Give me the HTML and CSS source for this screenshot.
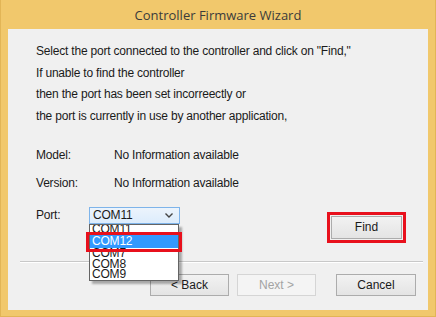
FILE: index.html
```html
<!DOCTYPE html>
<html lang="en">
<head>
    <meta charset="UTF-8">
    <meta name="viewport" content="width=device-width, initial-scale=1.0">
    <title>Controller Firmware Wizard</title>
    <link rel="stylesheet" href="styles.css">
</head>
<body>
    <div class="window">
        <div class="titlebar">Controller Firmware Wizard</div>

        <div class="content">
            <!-- intro text -->
            <div class="intro">
                <p>Select the port connected to the controller and click on "Find,"</p>
                <p>If unable to find the controller</p>
                <p>then the port has been set incorreectly or</p>
                <p>the port is currently in use by another application,</p>
            </div>

            <!-- controller info -->
            <div class="info-row">
                <span class="label">Model:</span>
                <span class="value">No Information available</span>
            </div>
            <div class="info-row">
                <span class="label">Version:</span>
                <span class="value">No Information available</span>
            </div>

            <!-- port select -->
            <div class="port-row">
                <span class="label port-label">Port:</span>
                <div class="combo">
                    <div class="combo-box">
                        <span>COM11</span>
                        <svg class="chevron" width="8" height="5" viewBox="0 0 8 5">
                            <polyline points="0.5,0.5 4,4 7.5,0.5" fill="none" stroke="#444" stroke-width="1.4"/>
                        </svg>
                    </div>
                    <ul class="combo-list">
                        <li class="cut">COM11</li>
                        <li class="selected">COM12</li>
                        <li>COM7</li>
                        <li>COM8</li>
                        <li>COM9</li>
                    </ul>
                    <div class="mark mark-item"></div>
                </div>
                <div class="find-wrap">
                    <button class="btn find-btn">Find</button>
                </div>
            </div>

            <div class="separator"></div>

            <!-- wizard buttons -->
            <div class="footer">
                <button class="btn">&lt; Back</button>
                <button class="btn" disabled>Next &gt;</button>
                <button class="btn cancel-btn">Cancel</button>
            </div>
        </div>
    </div>
</body>
</html>
```

FILE: styles.css
```css
* {
    margin: 0;
    padding: 0;
    box-sizing: border-box;
}

body {
    width: 436px;
    height: 317px;
    overflow: hidden;
    font-family: "Liberation Sans", Arial, sans-serif;
    font-size: 12px;
    letter-spacing: -0.2px;
    color: #1a1a1a;
}

.window {
    width: 436px;
    height: 317px;
    background: #f1c86c;
    border-left: 1px solid #e2b556;
    border-right: 1px solid #e2b556;
    border-bottom: 1px solid #e2b556;
}

.titlebar {
    height: 29px;
    line-height: 30px;
    text-align: center;
    font-family: "Open Sans", "Noto Sans", sans-serif;
    font-size: 13px;
    letter-spacing: 0;
    color: #3b3b3b;
}

.content {
    margin: 0 7px;
    height: 281px;
    background: #f0f0f0;
    padding: 12px 0 0 28px;
    display: flex;
    flex-direction: column;
}

.intro p {
    line-height: 21.7px;
}

.info-row {
    display: flex;
    line-height: 28px;
}

.intro + .info-row {
    margin-top: 13px;
}

.label {
    width: 78px;
}

.port-row {
    display: flex;
    align-items: flex-start;
    margin-top: 10px;
    height: 36px;
}

.port-label {
    width: 53px;
    line-height: 17px;
}

.combo {
    position: relative;
    width: 91px;
}

.combo-box {
    height: 17px;
    border: 1px solid #7eb4ea;
    background: linear-gradient(#ecf4fc, #dcecfc);
    padding: 0 6px 0 3px;
    display: flex;
    align-items: center;
    justify-content: space-between;
    line-height: 15px;
}

.chevron {
    margin-top: 1px;
}

.combo-list {
    position: absolute;
    top: 17px;
    left: 0;
    width: 90px;
    height: 57px;
    list-style: none;
    background: #fff;
    border: 1px solid #646464;
    box-shadow: 3px 3px 2px rgba(0, 0, 0, 0.3);
    overflow: hidden;
    z-index: 2;
}

.combo-list li {
    height: 10.5px;
    line-height: 10.5px;
    padding-left: 2px;
}

.combo-list li.cut {
    margin-top: -1px;
}

.combo-list li.selected {
    height: 13px;
    line-height: 13px;
    margin-top: 1px;
    background: #3399ff;
    color: #fff;
}

.mark {
    position: absolute;
    border: 3px solid #e8101c;
    z-index: 3;
}

.mark-item {
    top: 25px;
    left: -3px;
    width: 96px;
    height: 20px;
}

.find-wrap {
    margin: 5px 22px 0 auto;
    border: 3px solid #e8101c;
    padding: 1px;
}

.btn {
    display: block;
    width: 79px;
    height: 22px;
    font-family: "Liberation Sans", Arial, sans-serif;
    font-size: 12px;
    color: #1a1a1a;
    background: linear-gradient(#f2f2f2, #e4e4e4);
    border: 1px solid #acacac;
}

.btn:disabled {
    color: #a3a3a3;
    background: #f4f4f4;
    border-color: #d5d5d5;
}

.find-btn {
    width: 71px;
    height: 23px;
}

.separator {
    margin: 18px 5px 0 -16px;
    border-top: 1px solid #c8c8c8;
    border-bottom: 1px solid #fff;
}

.footer {
    display: flex;
    margin-top: 11px;
    padding-left: 114px;
    gap: 8px;
}

.cancel-btn {
    margin-left: 12px;
    width: 80px;
}
```
